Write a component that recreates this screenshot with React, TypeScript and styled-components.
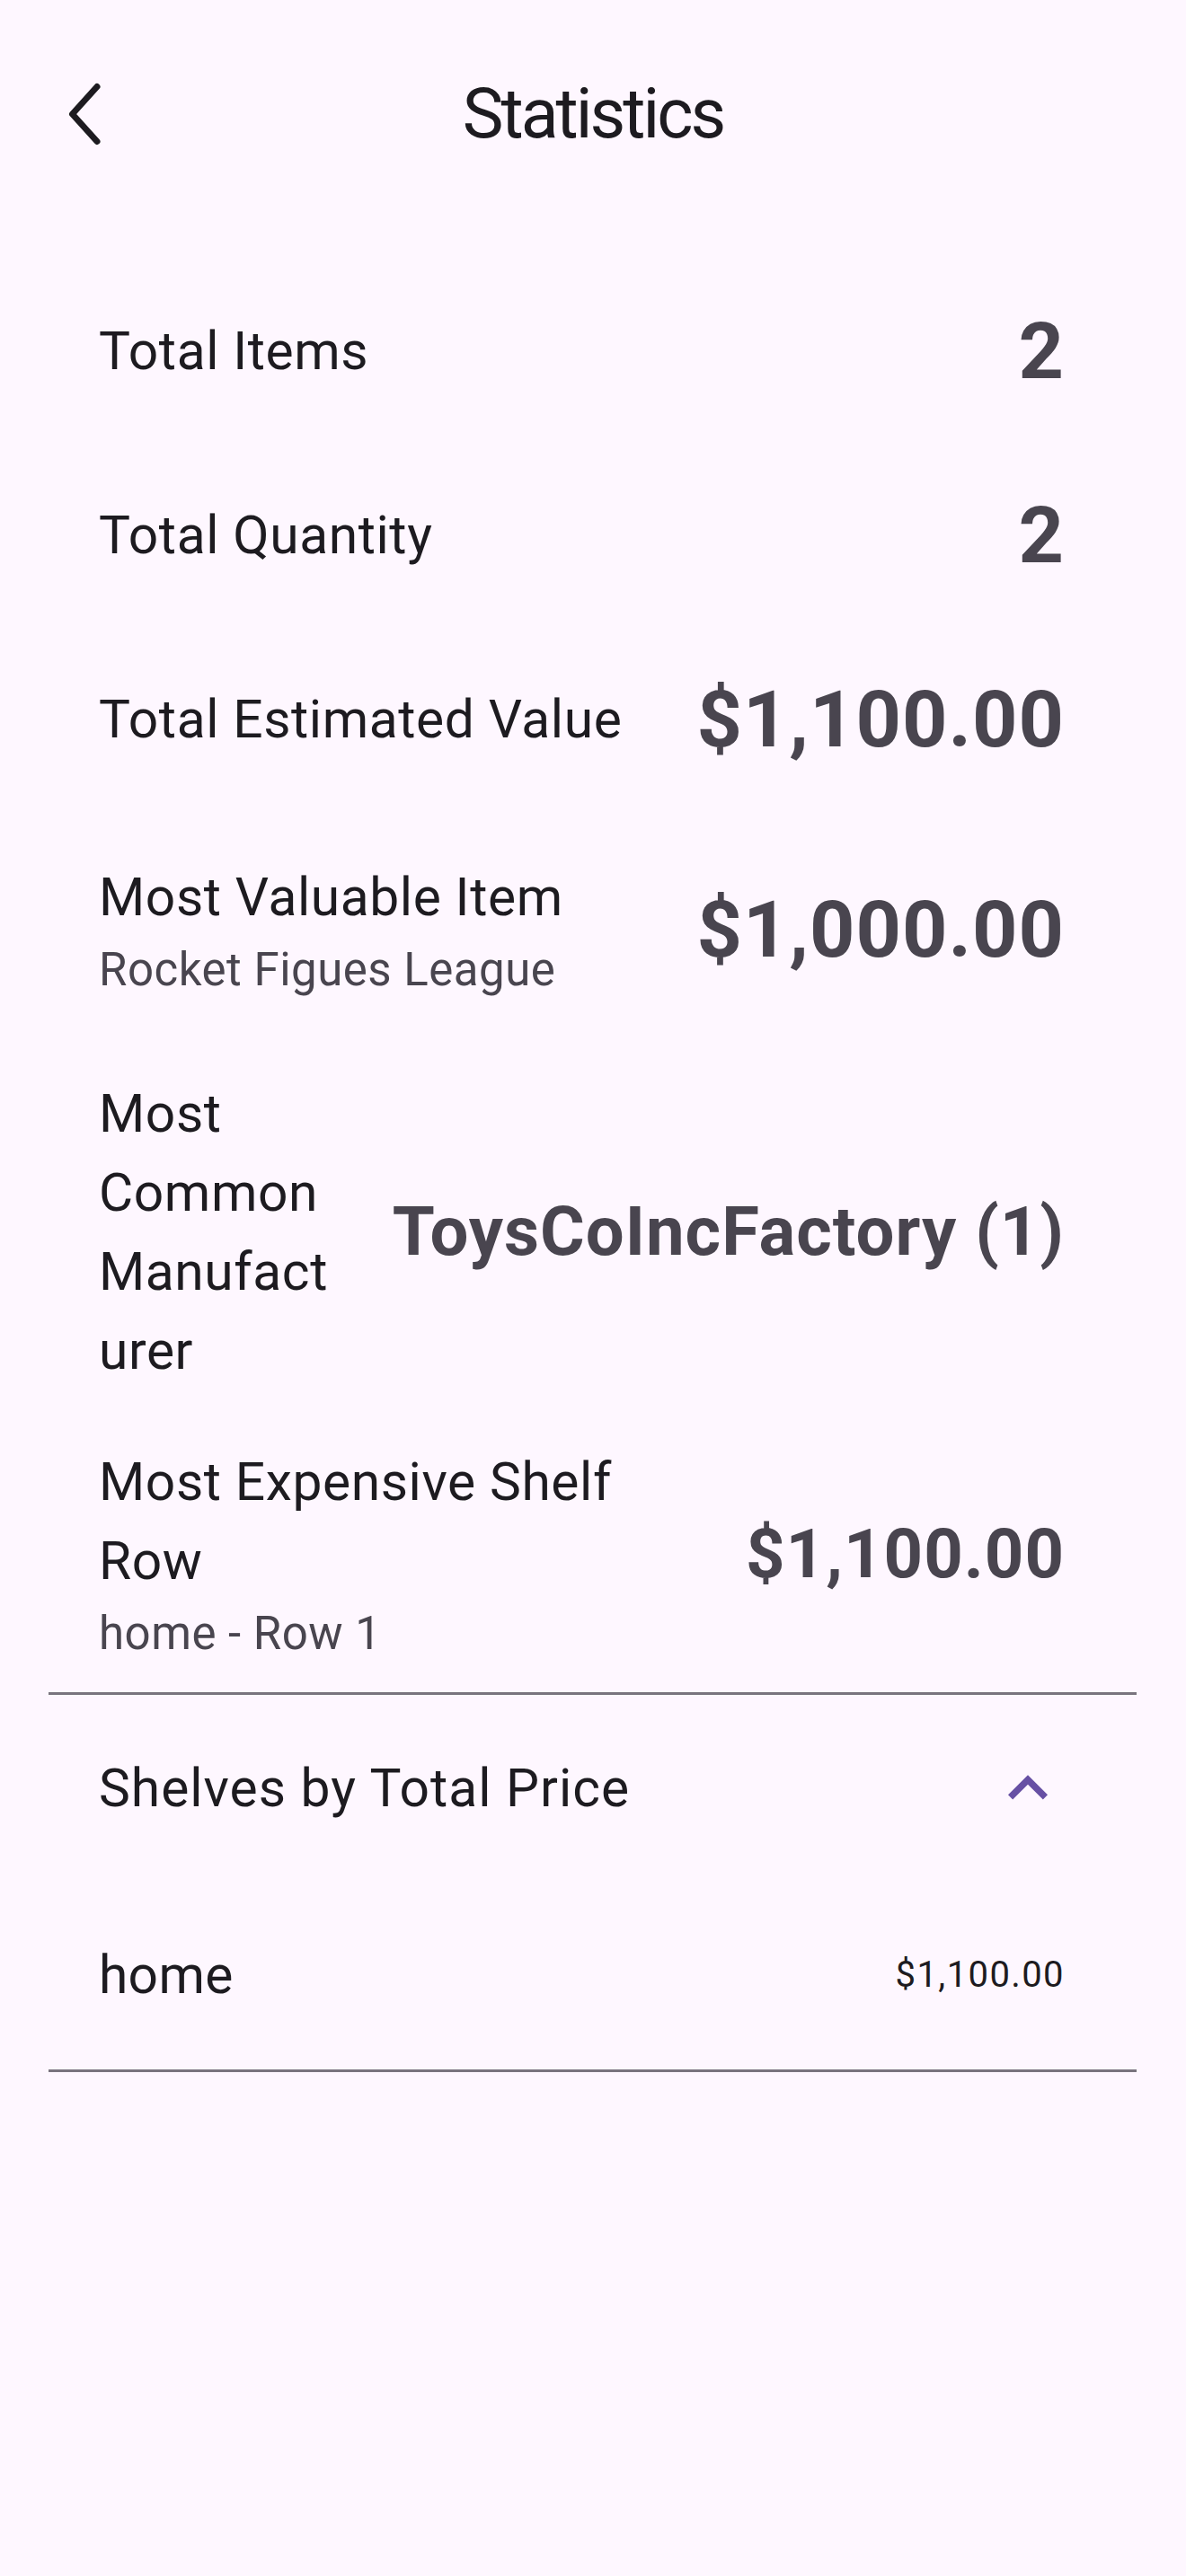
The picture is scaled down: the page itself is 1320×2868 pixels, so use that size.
import React from "react";
import styled, { createGlobalStyle } from "styled-components";

const GlobalStyle = createGlobalStyle`
  html, body {
    margin: 0;
    padding: 0;
    background: #fef7ff;
  }
  body {
    font-family: Roboto, "Noto Sans", "Liberation Sans", sans-serif;
    -webkit-font-smoothing: antialiased;
  }
  * { box-sizing: border-box; }
`;

const Page = styled.div`
  min-height: 2868px;
  background: #fef7ff;
  color: #1d1b20;
`;

const AppBar = styled.header`
  display: grid;
  grid-template-columns: 1fr auto 1fr;
  align-items: center;
  height: 254px;
`;

const BackButton = styled.button`
  justify-self: start;
  display: flex;
  align-items: center;
  justify-content: center;
  width: 48px;
  height: 80px;
  margin-left: 70px;
  padding: 0;
  border: none;
  background: transparent;
  color: #1d1b20;
  cursor: pointer;
`;

const Title = styled.h1`
  margin: 0;
  font-family: Roboto, "Noto Sans", sans-serif;
  font-size: 77px;
  font-weight: 400;
  line-height: 104px;
  letter-spacing: -3px;
  color: #1d1b20;
`;

const StatList = styled.section`
  display: flex;
  flex-direction: column;
  padding-top: 34px;
`;

const StatRow = styled.div<{ $minHeight: number }>`
  display: flex;
  align-items: center;
  gap: 59px;
  min-height: ${(p) => p.$minHeight}px;
  padding: 29px 135px 29px 110px;
`;

const LabelBlock = styled.div`
  flex: 1;
  min-width: 0;
  display: flex;
  flex-direction: column;
`;

const Label = styled.div`
  font-size: 58.7px;
  line-height: 88px;
  letter-spacing: 0.6px;
  color: #1d1b20;
  overflow-wrap: anywhere;
`;

const SubLabel = styled.div`
  font-size: 51px;
  line-height: 73px;
  letter-spacing: 0.5px;
  color: #49454f;
`;

const Value = styled.div<{ $size: number }>`
  flex-shrink: 0;
  white-space: nowrap;
  font-size: ${(p) => p.$size}px;
  font-weight: 700;
  line-height: 1.2;
  letter-spacing: 1px;
  color: #49454f;
`;

const Expansion = styled.section`
  margin: 0 55px 0 54px;
  border-top: 3px solid #79747e;
  border-bottom: 3px solid #79747e;
`;

const ExpansionHeader = styled.div`
  display: flex;
  align-items: center;
  justify-content: space-between;
  height: 207px;
  padding: 0 77px 0 56px;
`;

const ExpansionTitle = styled.div`
  font-size: 58.7px;
  line-height: 88px;
  letter-spacing: 1px;
  color: #1d1b20;
`;

const ExpandIcon = styled.svg`
  width: 88px;
  height: 88px;
  fill: #6750a4;
  flex-shrink: 0;
`;

const ShelfRow = styled.div`
  display: flex;
  align-items: center;
  justify-content: space-between;
  height: 210px;
  padding: 0 80px 0 56px;
`;

const ShelfName = styled.div`
  font-size: 58.7px;
  line-height: 88px;
  letter-spacing: 0.3px;
  color: #1d1b20;
`;

const ShelfPrice = styled.div`
  font-size: 40px;
  line-height: 58px;
  letter-spacing: 1.4px;
  color: #1d1b20;
`;

type Stat = {
  label: string;
  sub?: string;
  value: string;
  size: number;
  minHeight: number;
};

const stats: Stat[] = [
  { label: "Total Items", value: "2", size: 88, minHeight: 205 },
  { label: "Total Quantity", value: "2", size: 88, minHeight: 205 },
  { label: "Total Estimated Value", value: "$1,100.00", size: 88, minHeight: 205 },
  {
    label: "Most Valuable Item",
    sub: "Rocket Figues League",
    value: "$1,000.00",
    size: 88,
    minHeight: 264,
  },
  {
    label: "Most Common Manufacturer",
    value: "ToysCoIncFactory (1)",
    size: 76,
    minHeight: 205,
  },
  {
    label: "Most Expensive Shelf Row",
    sub: "home - Row 1",
    value: "$1,100.00",
    size: 76,
    minHeight: 205,
  },
];

export default function App() {
  return (
    <Page>
      <GlobalStyle />
      <AppBar>
        <BackButton aria-label="Back">
          <svg width="48" height="80" viewBox="0 0 48 80" fill="none">
            <polyline
              points="38,9.5 10.5,40 38,70.5"
              stroke="currentColor"
              strokeWidth="7"
              strokeLinecap="round"
              strokeLinejoin="round"
            />
          </svg>
        </BackButton>
        <Title>Statistics</Title>
        <div />
      </AppBar>

      <StatList>
        {stats.map((s) => (
          <StatRow key={s.label} $minHeight={s.minHeight}>
            <LabelBlock>
              <Label>{s.label}</Label>
              {s.sub && <SubLabel>{s.sub}</SubLabel>}
            </LabelBlock>
            <Value $size={s.size}>{s.value}</Value>
          </StatRow>
        ))}
      </StatList>

      <Expansion>
        <ExpansionHeader>
          <ExpansionTitle>Shelves by Total Price</ExpansionTitle>
          <ExpandIcon viewBox="0 0 24 24">
            <path d="M12 8l-6 6 1.41 1.41L12 10.83l4.59 4.58L18 14z" />
          </ExpandIcon>
        </ExpansionHeader>
        <ShelfRow>
          <ShelfName>home</ShelfName>
          <ShelfPrice>$1,100.00</ShelfPrice>
        </ShelfRow>
      </Expansion>
    </Page>
  );
}
